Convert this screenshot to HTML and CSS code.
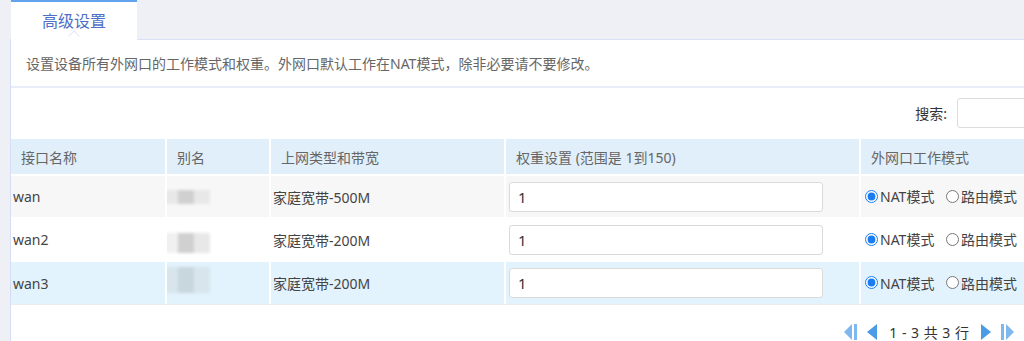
FILE: index.html
```html
<!DOCTYPE html>
<html lang="zh-CN">
<head>
    <meta charset="UTF-8">
    <title>高级设置</title>
    <link rel="stylesheet" href="styles.css">
</head>
<body>
    <div class="page">
        <div class="tabs">
            <div class="tab active">高级设置</div>
        </div>
        <div class="panel">
            <div class="desc">设置设备所有外网口的工作模式和权重。外网口默认工作在NAT模式，除非必要请不要修改。</div>
            <div class="toolbar">
                <label for="search">搜索:</label>
                <input type="text" id="search">
            </div>
            <table class="grid">
                <thead>
                    <tr>
                        <th class="c-name">接口名称</th>
                        <th class="c-alias">别名</th>
                        <th class="c-type">上网类型和带宽</th>
                        <th class="c-weight">权重设置 (范围是 1到150)</th>
                        <th class="c-mode">外网口工作模式</th>
                    </tr>
                </thead>
                <tbody>
                    <tr class="odd">
                        <td>wan</td>
                        <td><div class="blur b1"><span></span><span class="dark"></span><span></span></div></td>
                        <td>家庭宽带-500M</td>
                        <td><input type="text" class="weight" value="1"></td>
                        <td class="mode">
                            <label><input type="radio" name="m1" checked>NAT模式</label>
                            <label><input type="radio" name="m1">路由模式</label>
                        </td>
                    </tr>
                    <tr>
                        <td>wan2</td>
                        <td><div class="blur b2"><span></span><span class="dark"></span><span></span></div></td>
                        <td>家庭宽带-200M</td>
                        <td><input type="text" class="weight" value="1"></td>
                        <td class="mode">
                            <label><input type="radio" name="m2" checked>NAT模式</label>
                            <label><input type="radio" name="m2">路由模式</label>
                        </td>
                    </tr>
                    <tr class="hover">
                        <td>wan3</td>
                        <td><div class="blur b3"><span></span><span class="dark"></span><span></span></div></td>
                        <td>家庭宽带-200M</td>
                        <td><input type="text" class="weight" value="1"></td>
                        <td class="mode">
                            <label><input type="radio" name="m3" checked>NAT模式</label>
                            <label><input type="radio" name="m3">路由模式</label>
                        </td>
                    </tr>
                </tbody>
            </table>
            <div class="pager">
                <svg class="pg light" width="13" height="16" viewBox="0 0 13 16"><polygon points="8,0 8,16 0,8"/><rect x="10" y="0" width="3" height="16"/></svg>
                <svg class="pg" width="10" height="16" viewBox="0 0 10 16"><polygon points="10,0 10,16 0,8"/></svg>
                <span class="pg-text">1 - 3 共 3 行</span>
                <svg class="pg" width="10" height="16" viewBox="0 0 10 16"><polygon points="0,0 0,16 10,8"/></svg>
                <svg class="pg light" width="13" height="16" viewBox="0 0 13 16"><rect x="0" y="0" width="3" height="16"/><polygon points="5,0 5,16 13,8"/></svg>
            </div>
        </div>
    </div>
</body>
</html>
```

FILE: styles.css
```css
html, body {
    margin: 0;
    padding: 0;
    overflow: hidden;
}

body {
    background-color: #eff0f5;
    font-family: "Noto Sans", "Noto Sans CJK SC", sans-serif;
    font-size: 14px;
    color: #333;
}

.page {
    width: 1100px;
    padding-left: 10px;
}

.tabs {
    display: flex;
    height: 39px;
    padding-left: 1px;
}

.tab {
    position: relative;
    width: 126px;
    height: 41px;
    box-sizing: border-box;
    border-top: 2px solid #62a3ee;
    background-color: #fff;
    color: #4f6fc6;
    font-size: 16px;
    line-height: 38px;
    text-align: center;
    z-index: 1;
    margin-bottom: -2px;
}

.tab::after {
    content: "";
    position: absolute;
    left: 59px;
    bottom: 1px;
    width: 7px;
    height: 7px;
    border-top: 1px solid #e3e8f3;
    border-left: 1px solid #e3e8f3;
    transform: rotate(45deg);
}

.panel {
    background-color: #fff;
    border-top: 1px solid #d9e1f4;
    border-left: 1px solid #d5def4;
}

.desc {
    padding: 14px 15px 12px;
    line-height: 20px;
    font-size: 14px;
    color: #666;
    border-bottom: 2px solid #e7eefa;
}

.toolbar {
    display: flex;
    justify-content: flex-end;
    align-items: center;
    padding: 10px 23px 11px 0;
}

.toolbar label {
    font-size: 14px;
    margin-right: 10px;
}

.toolbar input {
    width: 130px;
    height: 30px;
    box-sizing: border-box;
    border: 1px solid #dcdcdc;
    border-radius: 3px;
}

.grid {
    width: 100%;
    border-collapse: separate;
    border-spacing: 0;
    table-layout: fixed;
    border-bottom: 1px solid #ececec;
}

.grid th, .grid td {
    box-sizing: border-box;
    border-right: 2px solid #fff;
    border-bottom: 2px solid #fff;
    text-align: left;
    white-space: nowrap;
    overflow: hidden;
}

.grid th {
    height: 37px;
    padding: 0 10px;
    background-color: #e1effa;
    color: #666;
    font-weight: normal;
    font-size: 14px;
}

.c-name { width: 156px; }
.c-alias { width: 104px; }
.c-type { width: 235px; }
.c-weight { width: 355px; }

.grid td {
    height: 43px;
    padding: 0 2px;
    color: #444;
}

.grid tbody tr:last-child td {
    height: 42px;
    border-bottom: none;
}

.grid tr.odd td {
    background-color: #f7f7f7;
}

.grid tr.hover td {
    background-color: #e2f3fd;
}

.weight {
    width: 314px;
    height: 30px;
    box-sizing: border-box;
    margin-left: 1px;
    padding: 0 8px;
    border: 1px solid #dadada;
    border-radius: 3px;
    font-family: inherit;
    font-size: 15px;
    color: #333;
    vertical-align: middle;
}

.mode {
    font-size: 14px;
}

.mode label {
    display: inline-flex;
    align-items: center;
    margin-right: 6px;
    color: #444;
}

.mode input {
    width: 13px;
    height: 13px;
    margin: 0 2px 0 2px;
    accent-color: #1a7cf0;
}

.blur {
    display: flex;
    margin-left: -7px;
    filter: blur(1.5px);
}

.blur span {
    display: block;
    width: 16px;
    height: 14px;
    background-color: #e8e8e8;
}

.blur span.dark {
    background-color: #d0d0d0;
}

.b2 span {
    height: 20px;
    margin-top: 6px;
}

.b2 span:first-child {
    background-color: #f0f0f0;
}

.b3 {
    margin-top: -6px;
}

.b3 span {
    height: 26px;
    background-color: #d8e5ec;
}

.b3 span.dark {
    background-color: #c8d6de;
}

.pager {
    display: flex;
    justify-content: flex-end;
    align-items: center;
    padding: 17px 96px 0 0;
    height: 20px;
}

.pg {
    fill: #4b9be6;
    margin-left: 10px;
}

.pg.light {
    fill: #7fb8ee;
}

.pg-text {
    margin: 0 2px 0 12px;
    font-size: 14px;
    word-spacing: 1px;
    color: #333;
}
```
